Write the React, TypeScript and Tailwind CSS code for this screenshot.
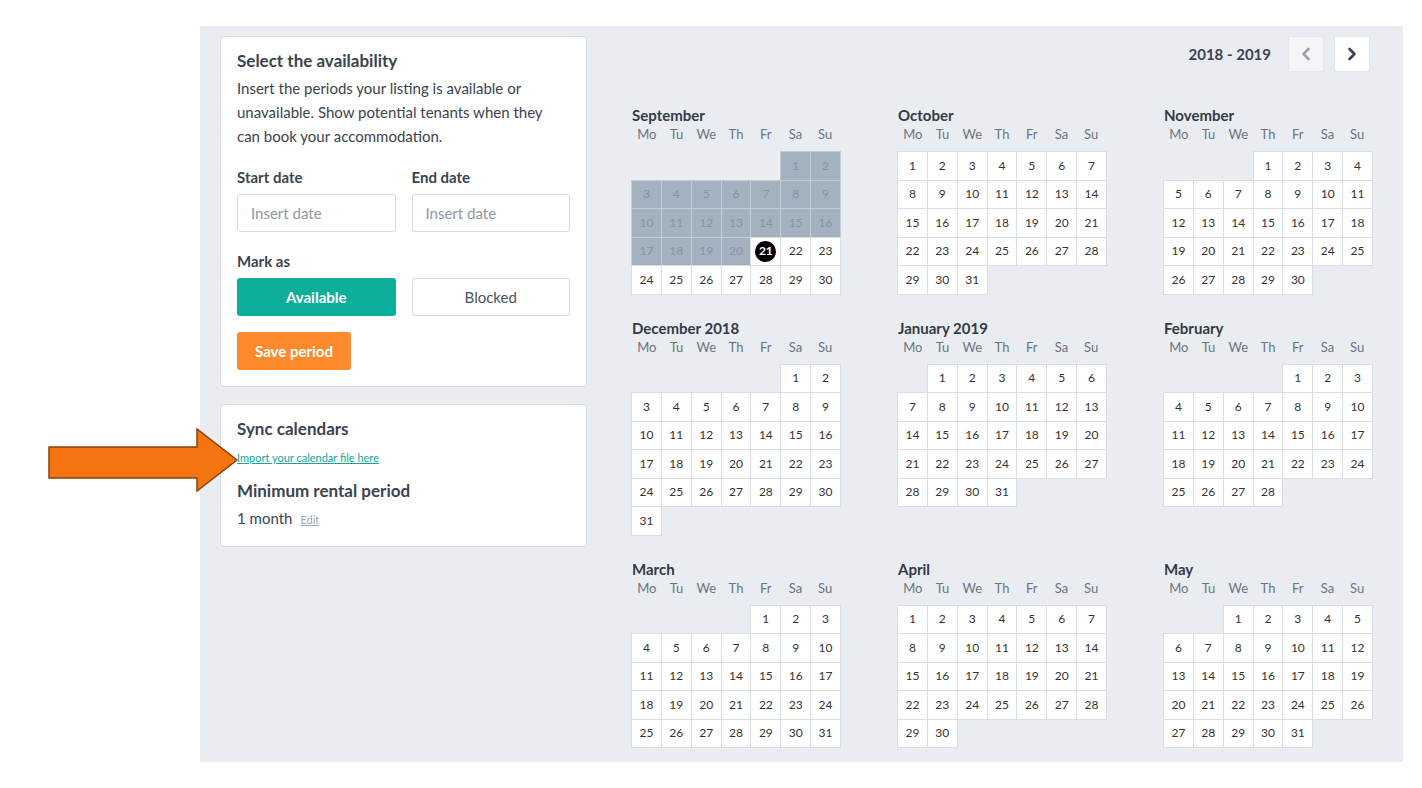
import React from 'react'

type Month = {
  name: string
  offset: number
  days: number
  blockedUntil?: number
  today?: number
}

const months: Month[] = [
  { name: 'September', offset: 5, days: 30, blockedUntil: 20, today: 21 },
  { name: 'October', offset: 0, days: 31 },
  { name: 'November', offset: 3, days: 30 },
  { name: 'December 2018', offset: 5, days: 31 },
  { name: 'January 2019', offset: 1, days: 31 },
  { name: 'February', offset: 4, days: 28 },
  { name: 'March', offset: 4, days: 31 },
  { name: 'April', offset: 0, days: 30 },
  { name: 'May', offset: 2, days: 31 },
]

const weekdays = ['Mo', 'Tu', 'We', 'Th', 'Fr', 'Sa', 'Su']

function MonthCalendar({ month }: { month: Month }) {
  const blanks = Array.from({ length: month.offset })
  const days = Array.from({ length: month.days }, (_, i) => i + 1)
  return (
    <div className="w-[208px]">
      <div className="text-[15px] leading-[20px] font-bold text-[#333b46]">{month.name}</div>
      <div className="grid grid-cols-7 text-[13px] leading-[18px] text-[#6b7480] text-center">
        {weekdays.map((d) => (
          <div key={d}>{d}</div>
        ))}
      </div>
      <div className="mt-[9px] grid grid-cols-7 gap-px auto-rows-[27.5px]">
        {blanks.map((_, i) => (
          <div key={'b' + i} />
        ))}
        {days.map((d) => {
          const blocked = month.blockedUntil !== undefined && d <= month.blockedUntil
          const today = month.today === d
          return (
            <div
              key={d}
              className={
                blocked
                  ? 'flex items-center justify-center bg-[#a3b2be] text-[#8495a3] text-[12px] shadow-[0_0_0_1px_#c3ccd4]'
                  : 'flex items-center justify-center bg-white text-[#333] text-[12px] shadow-[0_0_0_1px_#d9dee4]'
              }
            >
              {today ? (
                <span className="w-[21px] h-[21px] rounded-full bg-black text-white font-bold flex items-center justify-center">
                  {d}
                </span>
              ) : (
                d
              )}
            </div>
          )
        })}
      </div>
    </div>
  )
}

export default function App() {
  return (
    <div
      className="relative min-h-[788px] bg-white pt-[26px] pl-[200px]"
      style={{ fontFamily: 'Lato, "Noto Sans", sans-serif' }}
    >
      <div className="w-[1203px] h-[736px] bg-[#e9edf1] flex">
        {/* left column */}
        <div className="w-[367px] ml-[20px] mt-[10px] flex flex-col gap-[17px]">
          <div className="bg-white border border-[#d9dee4] rounded-[4px] px-[16px] pt-[13px] pb-[16px] text-[#3b4350]">
            <div className="text-[17px] leading-[22px] font-bold">Select the availability</div>
            <p className="mt-[4px] w-[315px] text-[15px] leading-[24px] text-[#3b4350]">
              Insert the periods your listing is available or unavailable. Show potential tenants when they can book
              your accommodation.
            </p>
            <div className="mt-[19px] grid grid-cols-2 gap-x-[16px]">
              <div>
                <div className="text-[15px] leading-[20px] font-bold">Start date</div>
                <input
                  placeholder="Insert date"
                  className="mt-[7px] w-full h-[38px] border border-[#d5dae0] rounded-[3px] px-[13px] text-[15px] placeholder:text-[#8e97a2] outline-none"
                />
              </div>
              <div>
                <div className="text-[15px] leading-[20px] font-bold">End date</div>
                <input
                  placeholder="Insert date"
                  className="mt-[7px] w-full h-[38px] border border-[#d5dae0] rounded-[3px] px-[13px] text-[15px] placeholder:text-[#8e97a2] outline-none"
                />
              </div>
            </div>
            <div className="mt-[19px] text-[15px] leading-[20px] font-bold">Mark as</div>
            <div className="mt-[7px] grid grid-cols-2 gap-x-[16px]">
              <button className="h-[38px] rounded-[3px] bg-[#0daf9b] text-white text-[15px] font-bold">
                Available
              </button>
              <button className="h-[38px] rounded-[3px] bg-white border border-[#d5dae0] text-[#4a5360] text-[15px]">
                Blocked
              </button>
            </div>
            <button className="mt-[16px] h-[38px] w-[114px] rounded-[3px] bg-[#fd8a2c] text-white text-[15px] font-bold">
              Save period
            </button>
          </div>

          <div className="bg-white border border-[#d9dee4] rounded-[4px] px-[16px] pt-[13px] pb-[15px] text-[#3b4350]">
            <div className="text-[17px] leading-[22px] font-bold">Sync calendars</div>
            <a href="#" className="block mt-[10px] text-[11px] leading-[16px] text-[#10a899] underline">
              Import your calendar file here
            </a>
            <div className="mt-[14px] text-[17px] leading-[22px] font-bold">Minimum rental period</div>
            <div className="mt-[5px] text-[15px] leading-[22px] flex items-baseline gap-[8px]">
              <span>1 month</span>
              <a href="#" className="text-[11px] text-[#9aa6b2] underline">
                Edit
              </a>
            </div>
          </div>
        </div>

        {/* calendars */}
        <div className="ml-[45px] w-[740px] pt-[10px]">
          <div className="flex items-center justify-end gap-[10px] pr-[2px]">
            <span className="mr-[7px] text-[15px] font-bold text-[#3b4350]">2018 - 2019</span>
            <button className="w-[36px] h-[36px] rounded-[2px] bg-[#f3f5f7] border border-[#e2e6ea] flex items-center justify-center">
              <svg width="12" height="14" viewBox="0 0 12 14" fill="none">
                <path d="M8.5 2 L3.5 7 L8.5 12" stroke="#9ba4ae" strokeWidth="2.6" strokeLinecap="round" strokeLinejoin="round" />
              </svg>
            </button>
            <button className="w-[36px] h-[36px] rounded-[2px] bg-white border border-[#e2e6ea] flex items-center justify-center">
              <svg width="12" height="14" viewBox="0 0 12 14" fill="none">
                <path d="M3.5 2 L8.5 7 L3.5 12" stroke="#3b4350" strokeWidth="2.6" strokeLinecap="round" strokeLinejoin="round" />
              </svg>
            </button>
          </div>
          <div className="mt-[33px] grid grid-cols-3 gap-x-[58px] gap-y-[24px] items-start">
            {months.map((m) => (
              <MonthCalendar key={m.name} month={m} />
            ))}
          </div>
        </div>
      </div>

      {/* annotation arrow */}
      <svg className="absolute left-[48px] top-[428px]" width="192" height="66" viewBox="0 0 192 66">
        <polygon
          points="1,19 149,19 149,1 189,32 149,63 149,50 1,50"
          fill="#f47410"
          stroke="#8a3f0d"
          strokeWidth="1.5"
          strokeLinejoin="miter"
        />
      </svg>
    </div>
  )
}
